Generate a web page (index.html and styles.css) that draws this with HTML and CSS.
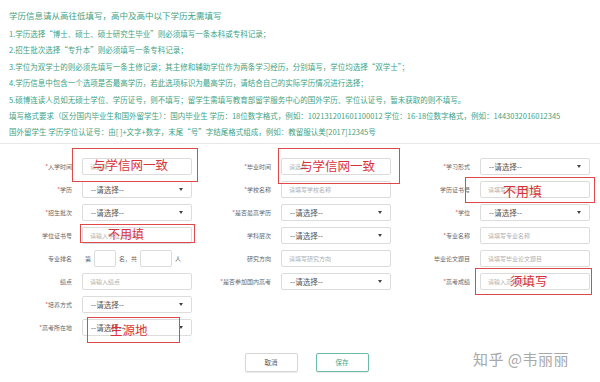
FILE: index.html
```html
<!DOCTYPE html>
<html lang="zh-CN">
<head>
    <meta charset="UTF-8">
    <title>学历信息</title>
    <link rel="stylesheet" href="styles.css">
</head>
<body>
    <div class="page">
        <div class="notes">
            <p class="title">学历信息请从高往低填写，高中及高中以下学历无需填写</p>
            <p>1.学历选择“博士、硕士、硕士研究生毕业”则必须填写一条本科或专科记录；</p>
            <p>2.招生批次选择“专升本”则必须填写一条专科记录；</p>
            <p>3.学位为双学士的则必须先填写一条主修记录；其主修和辅助学位作为两条学习经历，分别填写，学位均选择“双学士”；</p>
            <p>4.学历信息中包含一个选项是否最高学历，若此选项标识为最高学历，请结合自己的实际学历情况进行选择；</p>
            <p>5.硕博连读人员如无硕士学位、学历证号，则不填写；留学生需填写教育部留学服务中心的国外学历、学位认证号，暂未获取的则不填写。</p>
            <p>填写格式要求（区分国内毕业生和国外留学生）：国内毕业生 学历：18位数字格式，例如：102131201601100012 学位：16-18位数字格式，例如：1443032016012345</p>
            <p>国外留学生 学历学位认证号：由[ ]+文字+数字，末尾“号”字结尾格式组成，例如：教留服认美[2017]12345号</p>
        </div>

        <div class="form">
            <div class="col">
                <div class="row"><label><i>*</i>入学时间</label><input placeholder="请选择"></div>
                <div class="row"><label><i>*</i>学历</label><div class="select"><span>--请选择--</span></div></div>
                <div class="row"><label><i>*</i>招生批次</label><div class="select"><span>--请选择--</span></div></div>
                <div class="row"><label>学位证书号</label><input placeholder="请输入学位证书号"></div>
                <div class="row">
                    <label>专业排名</label>
                    <div class="rank">
                        <span>第</span><input class="small"><span>名，共</span><input class="mid"><span>人</span>
                    </div>
                </div>
                <div class="row"><label>绩点</label><input placeholder="请输入绩点"></div>
                <div class="row"><label><i>*</i>培养方式</label><div class="select"><span>--请选择--</span></div></div>
                <div class="row"><label><i>*</i>高考所在地</label><div class="select"><span>--请选择--</span></div></div>
            </div>
            <div class="col">
                <div class="row"><label><i>*</i>毕业时间</label><input placeholder="请选择"></div>
                <div class="row"><label><i>*</i>学校名称</label><input placeholder="请填写学校名称"></div>
                <div class="row"><label><i>*</i>是否最高学历</label><div class="select"><span>--请选择--</span></div></div>
                <div class="row"><label>学科层次</label><div class="select"><span>--请选择--</span></div></div>
                <div class="row"><label>研究方向</label><input placeholder="请填写研究方向"></div>
                <div class="row"><label><i>*</i>是否参加国内高考</label><div class="select"><span>--请选择--</span></div></div>
            </div>
            <div class="col">
                <div class="row"><label><i>*</i>学习形式</label><div class="select"><span>--请选择--</span></div></div>
                <div class="row"><label>学历证书号</label><input placeholder="请填写学历证书号"></div>
                <div class="row"><label><i>*</i>学位</label><div class="select"><span>--请选择--</span></div></div>
                <div class="row"><label><i>*</i>专业名称</label><input placeholder="请填写专业名称"></div>
                <div class="row"><label>毕业论文题目</label><input placeholder="请填写毕业论文题目"></div>
                <div class="row"><label><i>*</i>高考成绩</label><input placeholder="请输入高考成绩"></div>
            </div>
        </div>

        <div class="actions">
            <button class="btn">取消</button>
            <button class="btn save">保存</button>
        </div>

        <!-- red hand annotations drawn over the screenshot -->
        <div class="mark m1"><span>与学信网一致</span></div>
        <div class="mark m2"><span>与学信网一致</span></div>
        <div class="mark m3"><span>不用填</span></div>
        <div class="mark m4"><span>不用填</span></div>
        <div class="mark m5"><span>须填写</span></div>
        <div class="mark m6"><span>生源地</span></div>

        <div class="watermark">知乎 @韦丽丽</div>
    </div>
</body>
</html>
```

FILE: styles.css
```css
body { margin: 0; background: #fff; font-family: "Noto Sans CJK SC", "Noto Sans", sans-serif; }
.page { position: relative; width: 600px; height: 382px; overflow: hidden; }

.notes { padding: 8px 9px 0; color: #3ea283; border-bottom: 1px solid #e8e8e8; margin-bottom: 14px; padding-bottom: 2px; }
.notes p { margin: 0; font-size: 7.5px; line-height: 16.4px; white-space: nowrap; }
.notes .title { font-size: 8.5px; line-height: 14px; margin-bottom: 4px; }

.form { display: flex; }
.col { width: 199px; display: flex; flex-direction: column; gap: 6px; }
.row { display: flex; align-items: center; height: 17px; }
.row label {
    width: 72px;
    text-align: right;
    font-size: 6px;
    color: #666;
    margin-right: 10px;
    white-space: nowrap;
}
.row label i { font-style: normal; color: #e05a5a; }

input {
    box-sizing: border-box;
    width: 110px;
    height: 17px;
    border: 1px solid #dcdcdc;
    border-radius: 2px;
    padding: 0 7px;
    font-family: inherit;
    font-size: 6px;
    outline: none;
}
input::placeholder { color: #b0b0b0; }

.select {
    box-sizing: border-box;
    width: 110px;
    height: 17px;
    border: 1px solid #dcdcdc;
    border-radius: 2px;
    padding: 0 8px;
    display: flex;
    align-items: center;
    justify-content: space-between;
    font-size: 7.5px;
    color: #555;
}
.select::after {
    content: "";
    border-left: 2px solid transparent;
    border-right: 2px solid transparent;
    border-top: 3px solid #444;
}

.rank { display: flex; align-items: center; font-size: 6px; color: #666; }
.rank span { margin: 0 3px; }
.rank span:first-child { margin-left: 3px; }
.rank input.small { width: 22px; padding: 0; }
.rank input.mid { width: 32px; padding: 0; }

.actions { display: flex; justify-content: center; gap: 18px; padding: 17px 0 0 13px; }
.btn {
    width: 53px;
    height: 19px;
    background: #fff;
    border: 1px solid #d6d6d6;
    border-radius: 2px;
    box-shadow: 0 1px 1px rgba(0,0,0,0.08);
    font-family: inherit;
    font-size: 6.5px;
    color: #555;
    padding: 0;
}
.btn.save { border-color: #6bbba6; color: #3ea283; }

.mark {
    position: absolute;
    box-sizing: border-box;
    border: 1.5px solid #e04848;
    display: flex;
    align-items: center;
    color: #d8333b;
    font-size: 12.5px;
    line-height: 1;
}
.m1 { left: 72px; top: 148px; width: 126px; height: 34px; padding-left: 20px; }
.m2 { left: 278px; top: 148px; width: 122px; height: 36px; padding-left: 21px; }
.m3 { left: 465px; top: 177px; width: 130px; height: 26px; padding-left: 37px; font-size: 13px; }
.m4 { left: 80px; top: 224px; width: 115px; height: 19px; padding-left: 27px; font-size: 12px; }
.m5 { left: 475px; top: 268px; width: 117px; height: 27px; padding-left: 34px; font-size: 12.5px; }
.m6 { left: 87px; top: 317px; width: 93px; height: 26px; padding-left: 22px; font-size: 12.5px; }

.watermark {
    position: absolute;
    left: 473px;
    top: 348px;
    font-size: 15px;
    color: #a8a8a8;
    letter-spacing: 0.5px;
    text-shadow: 0 0 2px #fff;
}
```
